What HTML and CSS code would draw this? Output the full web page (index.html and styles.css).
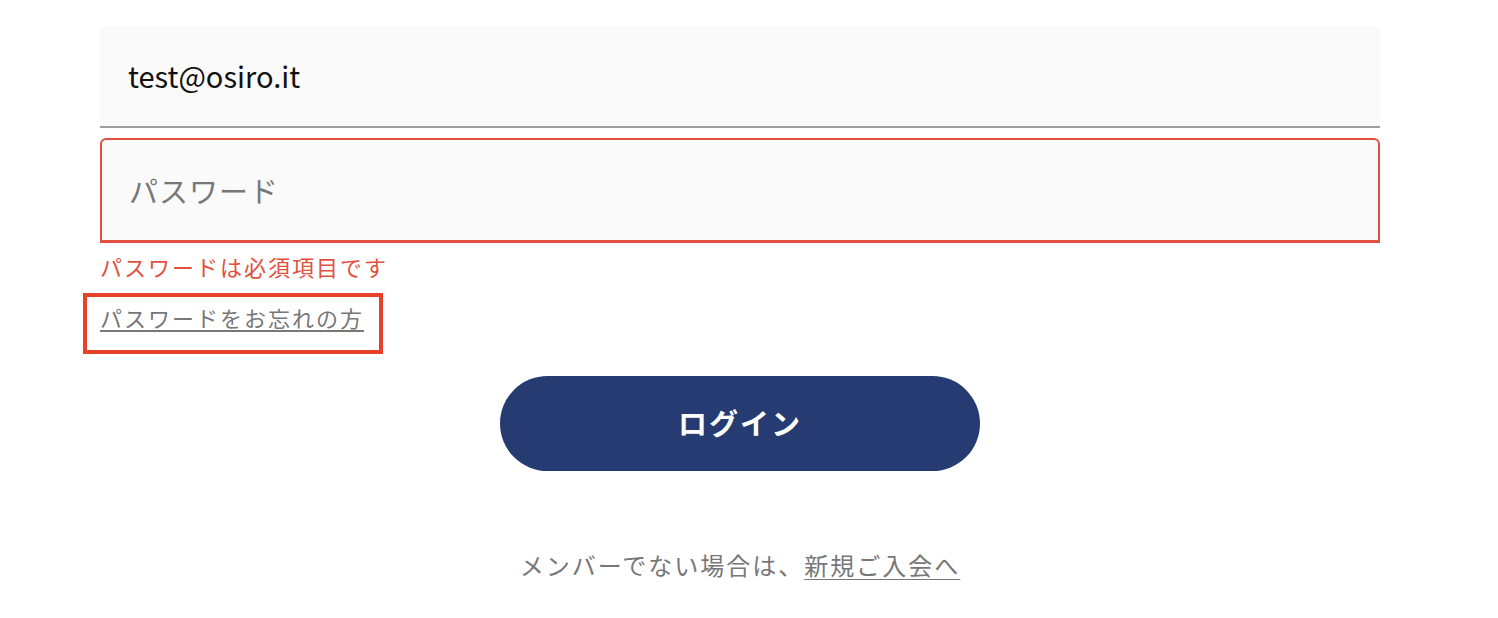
FILE: index.html
```html
<!DOCTYPE html>
<html lang="ja">
<head>
<meta charset="utf-8">
<link rel="stylesheet" href="styles.css">
</head>
<body>
<form class="login-form">
  <div class="field field-email">
    <span class="field-value">test@osiro.it</span>
  </div>
  <div class="field field-password">
    <span class="field-placeholder">パスワード</span>
  </div>
  <p class="error-text">パスワードは必須項目です</p>
  <div class="forgot-row">
    <a class="forgot-link" href="#">パスワードをお忘れの方</a>
  </div>
  <div class="button-row">
    <button type="button" class="login-button">ログイン</button>
  </div>
  <p class="signup-text">メンバーでない場合は、<a class="signup-link" href="#">新規ご入会へ</a></p>
</form>
</body>
</html>
```
FILE: styles.css
```css
html, body {
  margin: 0;
  padding: 0;
  background: #ffffff;
}
body {
  font-family: "Noto Sans CJK JP", "Noto Sans", sans-serif;
}
.login-form {
  width: 1280px;
  margin: 26px 0 0 100px;
}
.field {
  box-sizing: border-box;
  display: flex;
  align-items: center;
  background: #fafafa;
  border-radius: 6px 6px 0 0;
  padding: 0 28px;
}
.field-email {
  height: 102px;
  border-bottom: 2px solid #9e9e9e;
}
.field-value {
  font-size: 29px;
  color: #111111;
  margin-top: -2px;
}
.field-password {
  margin-top: 10px;
  height: 105px;
  border: 2px solid #e0513f;
  border-bottom-width: 3px;
  padding-left: 27px;
}
.field-placeholder {
  font-size: 29px;
  color: #777777;
  letter-spacing: 1px;
}
.error-text {
  margin: 8px 0 0;
  font-size: 22px;
  line-height: 30px;
  letter-spacing: 2px;
  color: #e0513f;
}
.forgot-row {
  margin-top: 21px;
  line-height: 30px;
}
.forgot-link {
  position: relative;
  display: inline-block;
  font-size: 22px;
  line-height: 30px;
  letter-spacing: 2px;
  color: #777777;
  text-decoration: underline;
  text-underline-offset: 3px;
}
.forgot-link::after {
  content: "";
  position: absolute;
  left: -17px;
  top: -9px;
  right: -19px;
  bottom: -22px;
  border: 4px solid #e8412a;
}
.button-row {
  display: flex;
  justify-content: center;
  margin-top: 41px;
}
.login-button {
  width: 480px;
  height: 95px;
  border: none;
  border-radius: 48px;
  background: #253b72;
  color: #ffffff;
  font-family: inherit;
  font-size: 29px;
  font-weight: 700;
  letter-spacing: 2px;
  padding: 0 0 4px;
}
.signup-text {
  margin: 79px 0 0;
  text-align: center;
  font-size: 24px;
  line-height: 30px;
  letter-spacing: 2px;
  color: #777777;
}
.signup-link {
  color: #777777;
  text-decoration: underline;
  text-underline-offset: 4px;
}
```
